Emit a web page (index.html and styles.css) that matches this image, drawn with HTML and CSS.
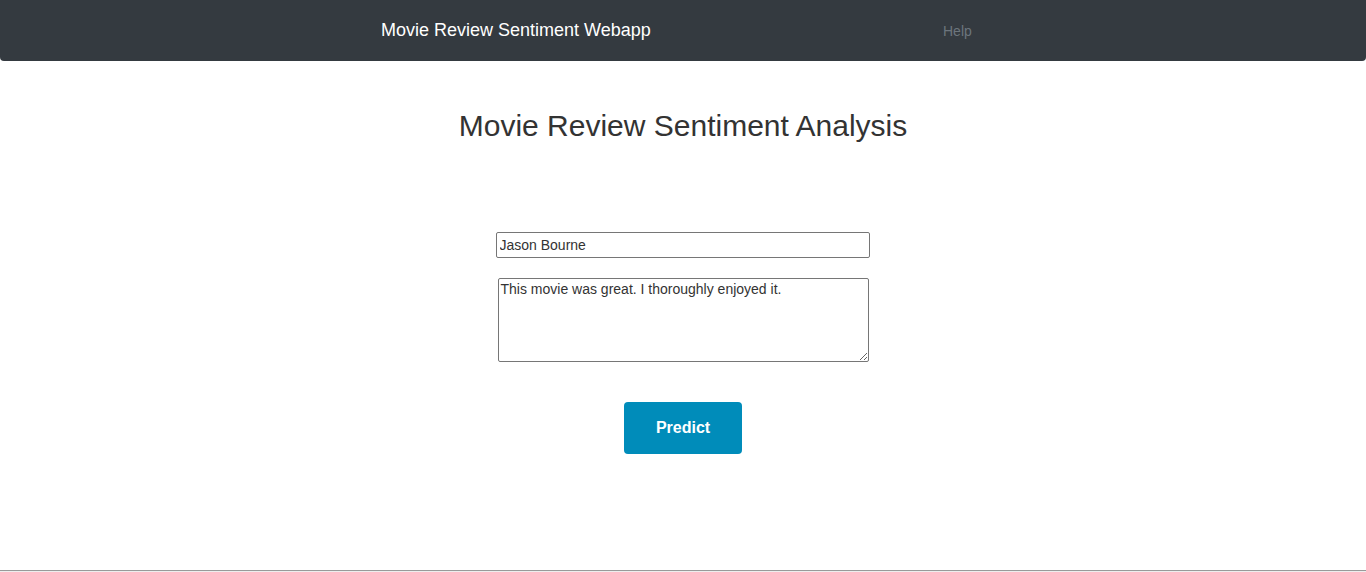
FILE: index.html
```html
<!DOCTYPE html>
<html>
<head>
<meta charset="utf-8">
<link rel="stylesheet" href="styles.css">
</head>
<body>
<nav class="navbar">
  <span class="brand">Movie Review Sentiment Webapp</span>
  <a class="nav-link" href="#">Help</a>
</nav>
<main class="main">
  <h1 class="title">Movie Review Sentiment Analysis</h1>
  <form class="form">
    <input class="movie-input" type="text" value="Jason Bourne">
    <textarea class="review-input">This movie was great. I thoroughly enjoyed it.</textarea>
    <button class="predict" type="button">Predict</button>
  </form>
</main>
<hr class="rule">
</body>
</html>
```
FILE: styles.css
```css
html, body {
  margin: 0;
  padding: 0;
  background: #fff;
  font-family: "Liberation Sans", Arial, sans-serif;
}
.navbar {
  height: 61px;
  background: #343a40;
  border-radius: 0 0 4px 4px;
  display: flex;
  align-items: center;
  padding-left: 381px;
  box-sizing: border-box;
}
.brand {
  color: #fff;
  font-size: 18px;
  width: 562px;
}
.nav-link {
  color: #6c757d;
  font-size: 14px;
  text-decoration: none;
}
.main {
  height: 509px;
  display: flex;
  flex-direction: column;
  align-items: center;
}
.title {
  margin: 47px 0 0;
  font-weight: normal;
  font-size: 30px;
  color: #333;
  line-height: 36px;
}
.form {
  display: flex;
  flex-direction: column;
  align-items: center;
  margin-top: 88px;
}
.movie-input {
  width: 374px;
  height: 26px;
  box-sizing: border-box;
  border: 1px solid #767676;
  border-radius: 2px;
  font-family: "Liberation Sans", Arial, sans-serif;
  font-size: 14px;
  color: #333;
  padding: 1px 3px;
  margin: 0 0 0 -1px;
}
.review-input {
  width: 371px;
  height: 84px;
  box-sizing: border-box;
  border: 1px solid #767676;
  border-radius: 2px;
  font-family: "Liberation Sans", Arial, sans-serif;
  font-size: 14px;
  color: #333;
  padding: 2px 2px;
  margin-top: 20px;
  margin-left: 0;
  resize: both;
}
.predict {
  margin-top: 40px;
  width: 118px;
  height: 52px;
  background: #008cba;
  color: #fff;
  border: none;
  border-radius: 4px;
  font-family: "Liberation Sans", Arial, sans-serif;
  font-weight: bold;
  font-size: 16px;
}
.rule {
  margin: 0;
  border: none;
  border-top: 1px solid #9a9a9a;
  border-bottom: 1px solid #eeeeee;
}
```
